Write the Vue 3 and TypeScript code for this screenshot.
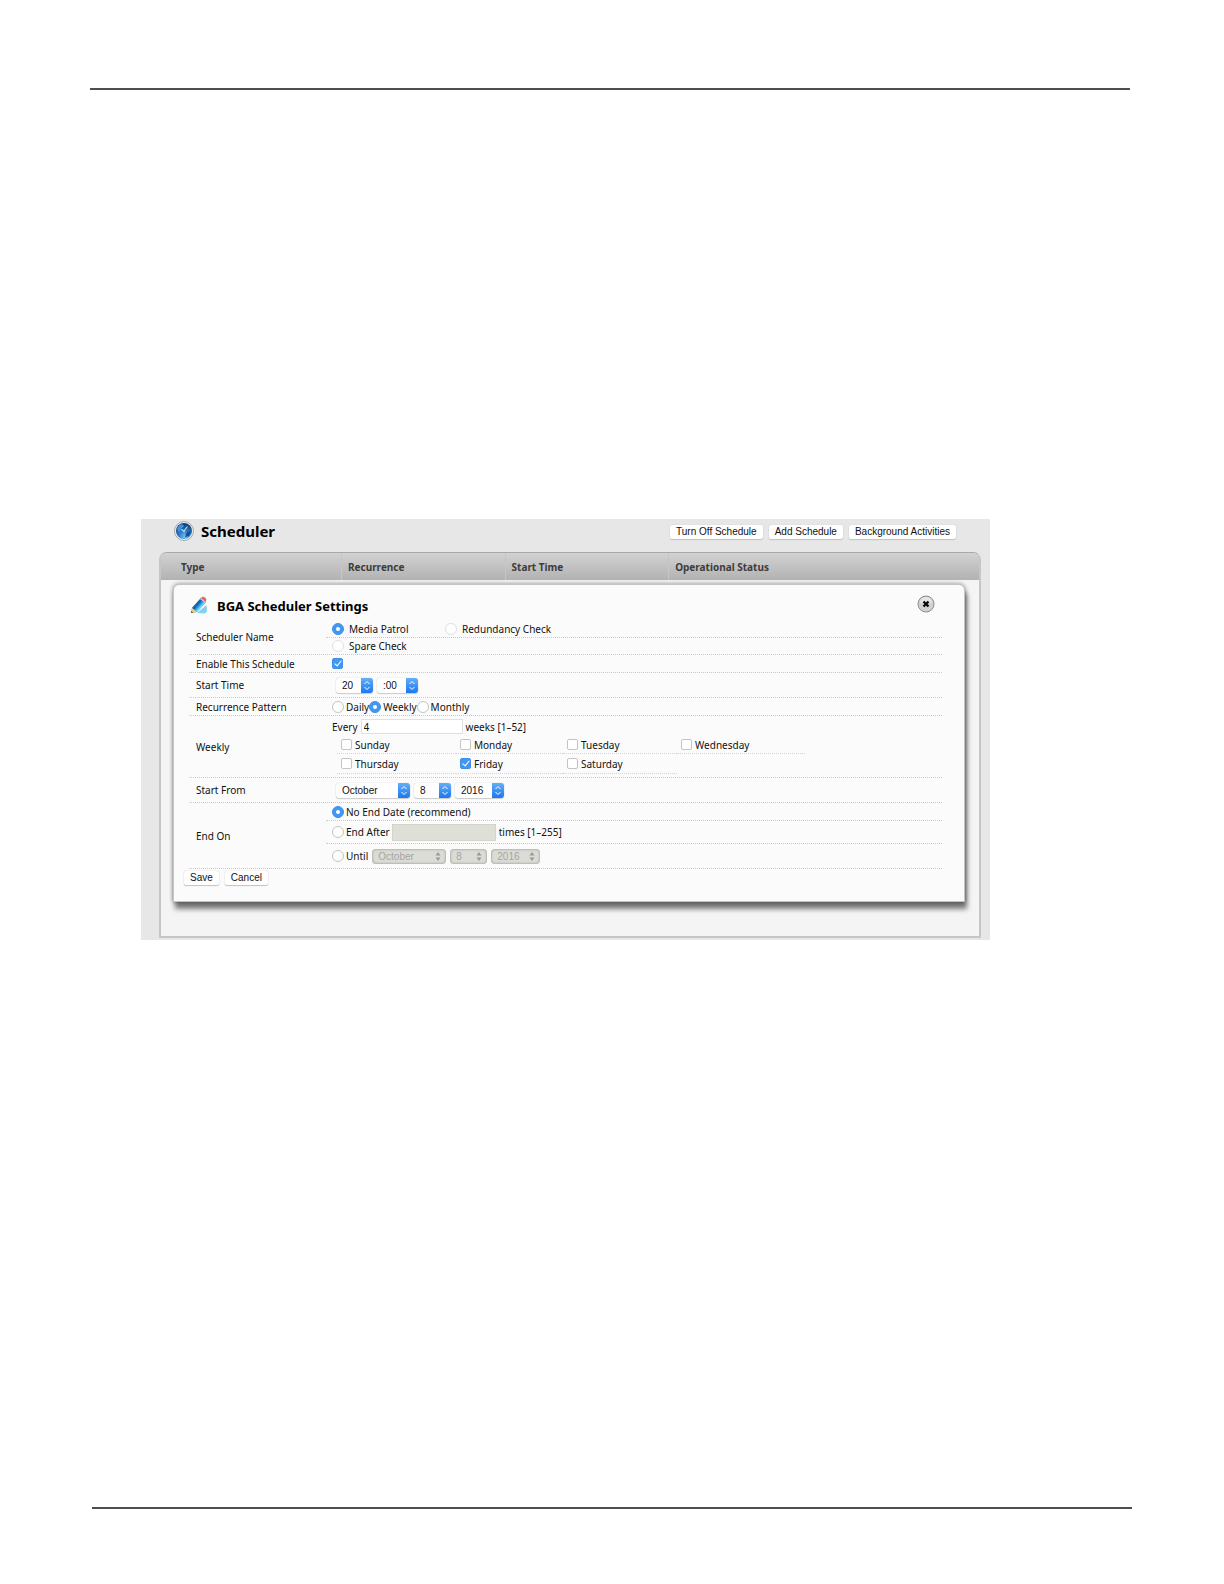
<script setup lang="ts">
import { ref } from 'vue'

const columns = ['Type', 'Recurrence', 'Start Time', 'Operational Status']
const days = ['Sunday', 'Monday', 'Tuesday', 'Wednesday', 'Thursday', 'Friday', 'Saturday']

const task = ref('media')
const enabled = ref(true)
const pattern = ref('Weekly')
const weeks = ref('4')
const chosenDays = ref<string[]>(['Friday'])
const endMode = ref('none')
</script>

<template>
  <div class="page">
    <div class="rule top"></div>
    <main class="panel">
      <header class="panel-head">
        <svg class="globe" viewBox="0 0 20 20" aria-hidden="true">
          <defs>
            <radialGradient id="sea" cx="0.55" cy="0.85" r="0.85">
              <stop offset="0" stop-color="#6cc4f4" />
              <stop offset="0.45" stop-color="#2a78c8" />
              <stop offset="1" stop-color="#123468" />
            </radialGradient>
          </defs>
          <circle cx="10" cy="10" r="9.5" fill="#eef0f2" stroke="#a4a8ac" />
          <circle cx="10" cy="10" r="8" fill="url(#sea)" />
          <path d="M3 8Q4 4 8 3L10 5L7 8L5 12Z" fill="#3f93d8" />
          <path d="M12 3L16 6L13 7ZM13 11L17 10L15 15L11 16Z" fill="#1b4b8e" />
          <path d="M10 10L13.500 5.500M10 10L7 8.500" stroke="#b4dcd8" stroke-width="1.200" fill="none" />
          <circle cx="10" cy="10" r="1.200" fill="#9fd0e8" />
        </svg>
        <h1>Scheduler</h1>
        <div class="actions">
          <button type="button">Turn Off Schedule</button>
          <button type="button">Add Schedule</button>
          <button type="button">Background Activities</button>
        </div>
      </header>

      <section class="list">
        <table>
          <thead>
            <tr><th v-for="c in columns" :key="c" scope="col">{{ c }}</th></tr>
          </thead>
        </table>

        <form class="dialog" @submit.prevent>
          <header class="dialog-head">
            <svg class="pencil" viewBox="0 0 18 18" aria-hidden="true">
              <path d="M7 17L16.500 9L17 15L15 17.500Z" fill="#7fd3ee" />
              <path d="M2 12L11 2L16 6L7 16L1 17Z" fill="#2a9be0" />
              <path d="M2 12L11 2L13 3.500L4 14Z" fill="#1464b4" />
              <path d="M5.500 15L14.500 5L16 6L7 16Z" fill="#74d0f4" />
              <path d="M10 3L12 1Q15 0 16.500 3.500L15.500 6.500Z" fill="#e0695c" />
              <path d="M10 3L11 2L16 6L15 7Z" fill="#a9cfe4" />
              <path d="M2 12L7 16L1 17Z" fill="#ead08a" />
              <path d="M1.500 15L3 16.600L1 17Z" fill="#4a4030" />
            </svg>
            <h2>BGA Scheduler Settings</h2>
            <button class="close" type="button" aria-label="Close">
              <svg viewBox="0 0 18 18" aria-hidden="true">
                <circle cx="9" cy="9" r="8" fill="#d2d2d2" stroke="#8c8c8c" />
                <path d="M3 8A6 6 0 0 1 15 8Z" fill="#e6e6e6" />
                <path d="M6.500 6.500L11.500 11.500M11.500 6.500L6.500 11.500" stroke="#0a0a0a" stroke-width="2.400" />
              </svg>
            </button>
          </header>

          <div class="field">
            <span class="name">Scheduler Name</span>
            <div class="stack">
              <div class="line short">
                <label class="option task"><input v-model="task" type="radio" name="task" value="media">Media Patrol</label>
                <label class="option task"><input v-model="task" type="radio" name="task" value="redundancy" disabled>Redundancy Check</label>
              </div>
              <div class="line">
                <label class="option task"><input v-model="task" type="radio" name="task" value="spare" disabled>Spare Check</label>
              </div>
            </div>
          </div>

          <div class="field">
            <label class="name" for="enable">Enable This Schedule</label>
            <div class="line short"><input id="enable" v-model="enabled" type="checkbox"></div>
          </div>

          <div class="field">
            <span class="name">Start Time</span>
            <div class="line tall picks">
              <span class="pick hour"><select aria-label="Hour"><option>20</option></select><svg viewBox="0 0 12 14" aria-hidden="true"><path d="M3.500 5.500L6 3L8.500 5.500M3.500 8.500L6 11L8.500 8.500" /></svg></span>
              <span class="pick minute"><select aria-label="Minute"><option>:00</option></select><svg viewBox="0 0 12 14" aria-hidden="true"><path d="M3.500 5.500L6 3L8.500 5.500M3.500 8.500L6 11L8.500 8.500" /></svg></span>
            </div>
          </div>

          <div class="field">
            <span class="name">Recurrence Pattern</span>
            <div class="line short">
              <label v-for="p in ['Daily', 'Weekly', 'Monthly']" :key="p" class="option">
                <input v-model="pattern" type="radio" name="pattern" :value="p">{{ p }}
              </label>
            </div>
          </div>

          <div class="field">
            <span class="name">Weekly</span>
            <div class="weekly">
              <div class="every">
                <label for="weeks">Every</label>
                <input id="weeks" v-model="weeks" type="text">
                <span>weeks [1–52]</span>
              </div>
              <div class="days">
                <label v-for="d in days" :key="d" class="option day">
                  <input v-model="chosenDays" type="checkbox" :value="d">{{ d }}
                </label>
              </div>
            </div>
          </div>

          <div class="field">
            <span class="name">Start From</span>
            <div class="line tall picks">
              <span class="pick month"><select aria-label="Start month"><option>October</option></select><svg viewBox="0 0 12 14" aria-hidden="true"><path d="M3.500 5.500L6 3L8.500 5.500M3.500 8.500L6 11L8.500 8.500" /></svg></span>
              <span class="pick date"><select aria-label="Start day"><option>8</option></select><svg viewBox="0 0 12 14" aria-hidden="true"><path d="M3.500 5.500L6 3L8.500 5.500M3.500 8.500L6 11L8.500 8.500" /></svg></span>
              <span class="pick year"><select aria-label="Start year"><option>2016</option></select><svg viewBox="0 0 12 14" aria-hidden="true"><path d="M3.500 5.500L6 3L8.500 5.500M3.500 8.500L6 11L8.500 8.500" /></svg></span>
            </div>
          </div>

          <div class="field">
            <span class="name">End On</span>
            <div class="stack">
              <div class="line short">
                <label class="option"><input v-model="endMode" type="radio" name="end" value="none">No End Date (recommend)</label>
              </div>
              <div class="line mid">
                <label class="option"><input v-model="endMode" type="radio" name="end" value="after">End After</label>
                <input class="times" type="text" aria-label="Number of times" disabled>
                <span>times [1–255]</span>
              </div>
              <div class="line tall">
                <label class="option"><input v-model="endMode" type="radio" name="end" value="until">Until</label>
                <div class="off picks">
                  <span class="pick month"><select aria-label="End month" disabled><option>October</option></select><svg viewBox="0 0 12 14" aria-hidden="true"><path d="M3.500 6L6 2.500L8.500 6ZM3.500 8L6 11.500L8.500 8Z" /></svg></span>
                  <span class="pick date"><select aria-label="End day" disabled><option>8</option></select><svg viewBox="0 0 12 14" aria-hidden="true"><path d="M3.500 6L6 2.500L8.500 6ZM3.500 8L6 11.500L8.500 8Z" /></svg></span>
                  <span class="pick year"><select aria-label="End year" disabled><option>2016</option></select><svg viewBox="0 0 12 14" aria-hidden="true"><path d="M3.500 6L6 2.500L8.500 6ZM3.500 8L6 11.500L8.500 8Z" /></svg></span>
                </div>
              </div>
            </div>
          </div>

          <footer class="buttons">
            <button type="submit">Save</button>
            <button type="button">Cancel</button>
          </footer>
        </form>
      </section>
    </main>
    <div class="rule bottom"></div>
  </div>
</template>

<style>
body {
  margin: 0;
  background: #fff;
}
</style>

<style scoped>
* {
  box-sizing: border-box;
}
.page {
  display: flex;
  flex-direction: column;
  min-height: 100vh;
  padding: 88px 92px 75px 90px;
  font: 10px/14px "Noto Sans", "Open Sans", sans-serif;
  color: #111;
}
.rule {
  height: 2px;
  background: #4e4e50;
}
.rule.top {
  margin-right: 2px;
}
.rule.bottom {
  margin: auto 0 0 2px;
}
.panel {
  margin: 429px 142px 0 51px;
  padding: 0 9px 2px 18px;
  background: #e7e7e7;
}
.panel-head {
  display: flex;
  align-items: center;
  height: 33px;
  padding: 0 25px 9px 15px;
}
.globe {
  width: 20px;
  height: 20px;
}
h1 {
  margin: 0 0 0 7px;
  font-size: 15px;
  line-height: 20px;
  color: #000;
}
.actions {
  display: flex;
  gap: 6px;
  margin: 2px 0 0 auto;
}
button {
  height: 14px;
  padding: 0 6px;
  border: 0;
  border-radius: 2px;
  background: #fff;
  box-shadow: 0 0 1px #bbb, 0 1px 1px #c4c4c4;
  font: 10px/14px "Liberation Sans", Arial, sans-serif;
  color: #111;
  white-space: nowrap;
}
.list {
  padding-bottom: 34px;
  border: 2px solid #c6c6c6;
  border-top: 1px solid #a9a9a9;
  border-radius: 8px 8px 0 0;
  background: #f4f4f4;
}
table {
  width: 100%;
  table-layout: fixed;
  border-collapse: separate;
  border-spacing: 0;
  border-radius: 6px 6px 0 0;
  background: linear-gradient(#d2d2d2, #b2b2b2);
}
th {
  width: 20%;
  height: 27px;
  padding: 0 0 0 6px;
  border-left: 1px solid #c6c6c6;
  text-align: left;
  font-size: 10px;
  color: #3c3c3c;
}
th:first-child {
  width: 22%;
  padding-left: 20px;
  border-left: 0;
}
th:last-child {
  width: 38%;
}
.dialog {
  margin: 4px 14px 0 12px;
  padding: 0 22px 16px 15px;
  border: 1px solid #c4c4c4;
  border-radius: 6px 6px 0 0;
  background: #fbfbfb;
  box-shadow: 0 0 4px rgba(0, 0, 0, 0.45), 2px 7px 5px rgba(0, 0, 0, 0.5);
}
.dialog-head {
  display: flex;
  align-items: center;
  height: 35px;
  padding: 5px 7px 0 1px;
}
.pencil {
  width: 18px;
  height: 18px;
}
h2 {
  margin: 2px 0 0 9px;
  font-size: 13px;
  line-height: 18px;
  color: #000;
}
.close {
  width: 18px;
  height: 18px;
  margin: 0 0 3px auto;
  padding: 0;
  border-radius: 9px;
  background: none;
  box-shadow: none;
}
.close svg {
  display: block;
}
.field {
  display: flex;
  align-items: center;
  border-bottom: 1px dotted #cacaca;
}
.name {
  width: 137px;
  padding-left: 7px;
}
.stack,
.weekly,
.field > .line {
  flex: 1;
}
.line {
  display: flex;
  align-items: center;
  height: 16px;
  padding-left: 6px;
}
.line.short {
  height: 17px;
}
.line.mid {
  height: 22px;
}
.line.tall {
  height: 24px;
}
.stack > .line + .line {
  border-top: 1px dotted #cacaca;
  box-sizing: content-box;
}
.option {
  display: flex;
  align-items: center;
  gap: 2px;
}
.option.task {
  width: 113px;
  gap: 5px;
}
input[type="radio"],
input[type="checkbox"] {
  display: grid;
  place-content: center;
  flex: none;
  appearance: none;
  width: 12px;
  height: 12px;
  margin: 0;
  border: 1px solid #c4c4c4;
  border-radius: 6px;
  background: #fff;
}
input[type="checkbox"] {
  width: 11px;
  height: 11px;
  border-radius: 2px;
}
input[type="radio"]:disabled {
  border-color: #e0e0e0;
}
input[type="radio"]:checked,
input[type="checkbox"]:checked {
  border-color: #3d8fea;
  background: #4297f2;
}
input[type="radio"]:checked::before {
  content: "";
  width: 4px;
  height: 4px;
  border-radius: 2px;
  background: #fff;
}
input[type="checkbox"]:checked::before {
  content: "";
  width: 3px;
  height: 6px;
  margin-bottom: 2px;
  border: solid #fff;
  border-width: 0 1px 1px 0;
  transform: rotate(40deg);
}
input[type="text"] {
  width: 102px;
  height: 15px;
  padding: 0 2px;
  border: 1px solid #e0e0e0;
  background: #fff;
  font: inherit;
  color: inherit;
}
.weekly {
  height: 61px;
  padding: 2px 0 0 6px;
}
.every {
  display: flex;
  align-items: center;
  gap: 3px;
  height: 17px;
}
.days {
  display: grid;
  grid-template-columns: 119px 107px 114px 128px;
  margin: 1px 0 0 5px;
}
.day {
  gap: 3px;
  height: 18px;
  padding-left: 4px;
  border-bottom: 1px dotted #d4d4d4;
}
.day:nth-child(n + 5) {
  height: 20px;
}
.picks {
  display: flex;
  gap: 4px;
}
.line.picks {
  padding-left: 10px;
}
.pick {
  display: flex;
  height: 15px;
  border-radius: 3px;
  background: #fff;
  box-shadow: 0 0 1px #bbb, 0 1px 1px #ccc;
  overflow: hidden;
}
.pick select {
  flex: 1;
  min-width: 0;
  appearance: none;
  padding: 0 0 0 6px;
  border: 0;
  background: none;
  font: 10px/15px "Liberation Sans", Arial, sans-serif;
  color: #111;
}
.pick svg {
  width: 12px;
  height: 15px;
  background: linear-gradient(#62aef8, #1c78f0);
  fill: none;
  stroke: #fff;
}
.hour {
  width: 37px;
}
.minute {
  width: 41px;
}
.month {
  width: 74px;
}
.date {
  width: 37px;
}
.year {
  width: 49px;
}
.off {
  margin-left: 4px;
}
.off .pick {
  border-radius: 4px;
  background: #dcdcd6;
  box-shadow: inset 0 0 2px 1px #b4b4ae;
}
.off .pick select {
  opacity: 1;
  color: #a5a5a0;
}
.off .pick svg {
  margin-right: 2px;
  background: none;
  fill: #999994;
  stroke: none;
}
.line input.times {
  width: 104px;
  height: 17px;
  margin: 0 3px 0 2px;
  border-color: #d4d4cc;
  background: #dedfd6;
}
.buttons {
  display: flex;
  gap: 6px;
  margin-left: -5px;
  padding-top: 2px;
}
</style>
